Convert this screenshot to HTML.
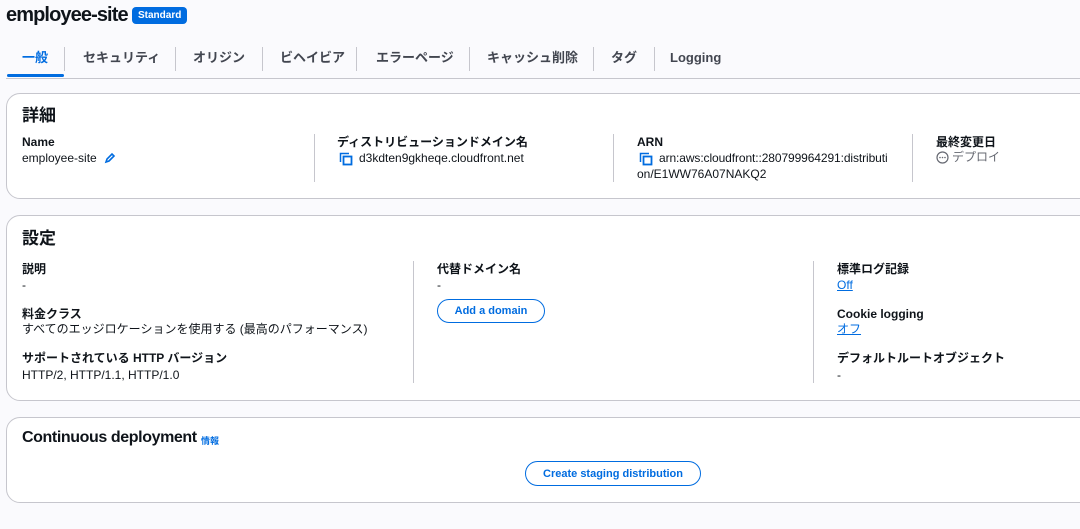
<!DOCTYPE html>
<html><head><meta charset="utf-8"><style>
*{margin:0;padding:0;box-sizing:border-box}
body{width:1080px;height:529px;overflow:hidden;background:#fafafd;font-family:"Liberation Sans","Noto Sans CJK JP",sans-serif;color:#0f141a;position:relative;font-size:12px;line-height:16px}
.a{position:absolute;white-space:nowrap}
.b{font-weight:bold}
.panel{position:absolute;left:6px;width:1100px;background:#fff;border:1px solid #c6c6cd;border-radius:14px}
.sep{position:absolute;width:1px;background:#c6c6cd}
.tab{position:absolute;top:50px;font-size:13px;font-weight:bold;color:#424650;line-height:16px}
.tsep{position:absolute;top:47px;height:24px;width:1px;background:#c6c6cd}
.lk{color:#006ce0;text-decoration:underline}
.btn{position:absolute;border:1.5px solid #006ce0;border-radius:20px;color:#006ce0;font-weight:bold;font-size:11px;display:flex;align-items:center;justify-content:center}
</style></head><body>
<div class="a b" style="left:6px;top:4px;font-size:20px;line-height:22px;letter-spacing:-0.9px">employee-site</div>
<div class="a b" style="left:132px;top:7px;height:17px;padding:0 6px;background:#006ce0;color:#fff;font-size:10px;line-height:17px;border-radius:4px">Standard</div>

<div class="tab" style="left:22px;color:#006ce0">一般</div>
<div class="a" style="left:7px;top:74px;width:57px;height:3px;background:#006ce0;border-radius:2px"></div>
<div class="tsep" style="left:64px"></div>
<div class="tab" style="left:83px">セキュリティ</div>
<div class="tsep" style="left:175px"></div>
<div class="tab" style="left:193px">オリジン</div>
<div class="tsep" style="left:262px"></div>
<div class="tab" style="left:280px">ビヘイビア</div>
<div class="tsep" style="left:356px"></div>
<div class="tab" style="left:376px">エラーページ</div>
<div class="tsep" style="left:469px"></div>
<div class="tab" style="left:487px">キャッシュ削除</div>
<div class="tsep" style="left:593px"></div>
<div class="tab" style="left:611px">タグ</div>
<div class="tsep" style="left:654px"></div>
<div class="tab" style="left:670px">Logging</div>
<div class="a" style="left:6px;top:78px;width:1074px;height:1px;background:#c6c6cd"></div>

<div class="panel" style="top:93px;height:106px"></div>
<div class="a b" style="left:22px;top:105px;font-size:17px;line-height:22px">詳細</div>
<div class="a b" style="left:22px;top:134px">Name</div>
<div class="a" style="left:22px;top:150px">employee-site</div>
<svg class="a" style="left:104px;top:152px" width="12" height="12" viewBox="0 0 12 12"><path d="M2 10l1-3 5-5 2 2-5 5z" fill="none" stroke="#006ce0" stroke-width="1.6"/></svg>
<div class="sep" style="left:314px;top:134px;height:48px"></div>
<div class="a b" style="left:337px;top:134px">ディストリビューションドメイン名</div>
<svg class="a" style="left:339px;top:152px" width="14" height="14" viewBox="0 0 14 14"><path d="M1.5 10V1.5H10" fill="none" stroke="#006ce0" stroke-width="1.5"/><rect x="4.5" y="4.5" width="8" height="8" fill="none" stroke="#006ce0" stroke-width="1.8"/></svg>
<div class="a" style="left:359px;top:150px">d3kdten9gkheqe.cloudfront.net</div>
<div class="sep" style="left:613px;top:134px;height:48px"></div>
<div class="a b" style="left:637px;top:134px">ARN</div>
<svg class="a" style="left:639px;top:152px" width="14" height="14" viewBox="0 0 14 14"><path d="M1.5 10V1.5H10" fill="none" stroke="#006ce0" stroke-width="1.5"/><rect x="4.5" y="4.5" width="8" height="8" fill="none" stroke="#006ce0" stroke-width="1.8"/></svg>
<div class="a" style="left:659px;top:150px;letter-spacing:-0.1px">arn:aws:cloudfront::280799964291:distributi</div>
<div class="a" style="left:637px;top:166px">on/E1WW76A07NAKQ2</div>
<div class="sep" style="left:912px;top:134px;height:48px"></div>
<div class="a b" style="left:936px;top:134px">最終変更日</div>
<svg class="a" style="left:936px;top:151px" width="13" height="13" viewBox="0 0 13 13"><circle cx="6.5" cy="6.5" r="5.5" fill="none" stroke="#656871" stroke-width="1.2"/><circle cx="4" cy="6.5" r=".8" fill="#656871"/><circle cx="6.5" cy="6.5" r=".8" fill="#656871"/><circle cx="9" cy="6.5" r=".8" fill="#656871"/></svg>
<div class="a" style="left:952px;top:149px;color:#656871">デプロイ</div>

<div class="panel" style="top:215px;height:186px"></div>
<div class="a b" style="left:22px;top:228px;font-size:17px;line-height:22px">設定</div>
<div class="a b" style="left:22px;top:261px">説明</div>
<div class="a" style="left:22px;top:277px">-</div>
<div class="a b" style="left:22px;top:306px">料金クラス</div>
<div class="a" style="left:22px;top:321px">すべてのエッジロケーションを使用する (最高のパフォーマンス)</div>
<div class="a b" style="left:22px;top:350px">サポートされている HTTP バージョン</div>
<div class="a" style="left:22px;top:367px">HTTP/2, HTTP/1.1, HTTP/1.0</div>
<div class="sep" style="left:413px;top:261px;height:122px"></div>
<div class="a b" style="left:437px;top:261px">代替ドメイン名</div>
<div class="a" style="left:437px;top:277px">-</div>
<div class="btn" style="left:437px;top:299px;width:108px;height:24px">Add a domain</div>
<div class="sep" style="left:813px;top:261px;height:122px"></div>
<div class="a b" style="left:837px;top:261px">標準ログ記録</div>
<div class="a lk" style="left:837px;top:277px">Off</div>
<div class="a b" style="left:837px;top:306px">Cookie logging</div>
<div class="a lk" style="left:837px;top:321px">オフ</div>
<div class="a b" style="left:837px;top:350px">デフォルトルートオブジェクト</div>
<div class="a" style="left:837px;top:367px">-</div>

<div class="panel" style="top:417px;height:86px"></div>
<div class="a b" style="left:22px;top:429px;font-size:16px;line-height:18px;letter-spacing:-0.4px">Continuous deployment</div>
<div class="a b" style="left:201px;top:433px;font-size:9px;color:#006ce0">情報</div>
<div class="btn" style="left:525px;top:461px;width:176px;height:25px">Create staging distribution</div>
</body></html>
